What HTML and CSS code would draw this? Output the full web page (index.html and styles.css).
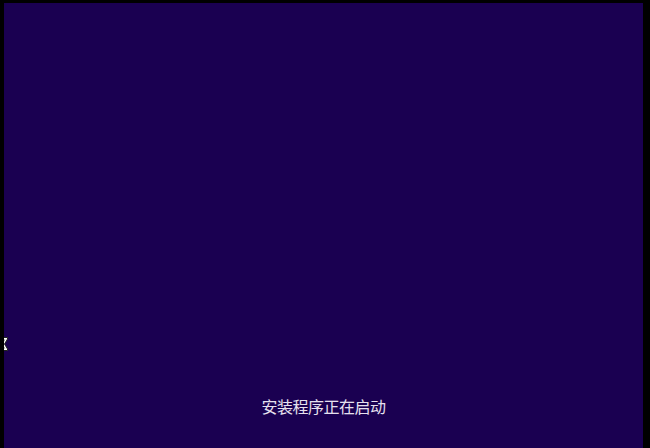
FILE: index.html
```html
<!DOCTYPE html>
<html lang="zh-CN">
<head>
<meta charset="utf-8">
<title>Windows 安装程序</title>
<link rel="stylesheet" href="styles.css">
</head>
<body>
<div class="screen">
  <svg class="cursor" width="9" height="14" viewBox="0 0 9 14" aria-hidden="true">
    <path d="M0.5 0.5 H8.5 V2 L5.5 7 L8.5 12 V13.5 H0.5 V12 L3.5 7 L0.5 2 Z" fill="#ffffff" stroke="#222" stroke-width="1"/>
    <path d="M2.5 2.5 H6.5 L4.5 5.5 Z M2.5 11.5 L4.5 9 L6.5 11.5 Z" fill="#888"/>
  </svg>
  <p class="status">安装程序正在启动</p>
</div>
</body>
</html>
```
FILE: styles.css
```css
html, body {
  margin: 0;
  padding: 0;
  background: #000000;
  width: 650px;
  height: 448px;
  overflow: hidden;
}
.screen {
  position: relative;
  margin: 3px 0 0 4px;
  width: 639px;
  height: 445px;
  background: #1a0051;
  overflow: hidden;
  display: flex;
  flex-direction: column;
  justify-content: flex-end;
  align-items: center;
  padding-bottom: 32px;
  box-sizing: border-box;
}
.status {
  margin: 0;
  font-family: "Noto Sans CJK SC", "Noto Sans", sans-serif;
  font-size: 16px;
  line-height: 20px;
  color: #e6e0ee;
  letter-spacing: -0.5px;
}
.cursor {
  position: absolute;
  left: -5px;
  top: 334px;
}
```
